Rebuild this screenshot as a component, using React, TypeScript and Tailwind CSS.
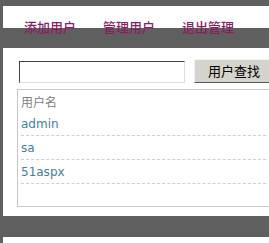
import React from 'react';

const users = ['admin', 'sa', '51aspx'];

export default function App() {
  return (
    <div className="w-[269px] h-[243px] overflow-hidden bg-[#5f5f5f] pt-[6px] pl-[3px] font-['Noto_Sans_CJK_SC',sans-serif]">
      {/* top nav */}
      <div className="h-[22px] bg-white">
        <div className="flex gap-[27px] pl-[21px] pt-[14px] text-[13px] leading-[14px] font-medium text-[#8b1d63]">
          <span>添加用户</span>
          <span>管理用户</span>
          <span>退出管理</span>
        </div>
      </div>

      {/* main card */}
      <div className="mt-[20px] h-[168px] bg-white pl-[14px] pt-[11px]">
        <div className="flex items-center gap-[9px]">
          <input
            type="text"
            className="mt-[2px] w-[166px] h-[22px] bg-white border border-t-[#444] border-l-[#444] border-r-[#ddd] border-b-[#ddd] ml-[2px]"
          />
          <button className="w-[90px] h-[24px] bg-[#d6d3cc] border border-t-[#f4f4f4] border-l-[#f4f4f4] border-r-[#555] border-b-[#555] text-[13px] leading-[22px] text-black text-left pl-[13px] shrink-0">
            用户查找
          </button>
        </div>

        <div className="mt-[6px] h-[118px] border border-[#c8c8c8] border-r-0 px-[3px] font-['DejaVu_Sans','Noto_Sans_CJK_SC',sans-serif] text-[12px]">
          <div className="h-[22px] pt-[5px] leading-[14px] text-[#808080] font-['Noto_Sans_CJK_SC',sans-serif]">用户名</div>
          {users.map((u) => (
            <div
              key={u}
              className="h-[24px] pt-[5px] leading-[14px] text-[#45819b] border-b border-dashed border-[#cfcfcf]"
            >
              {u}
            </div>
          ))}
        </div>
      </div>

      {/* next panel */}
      <div className="mt-[21px] h-[20px] bg-white" />
    </div>
  );
}
